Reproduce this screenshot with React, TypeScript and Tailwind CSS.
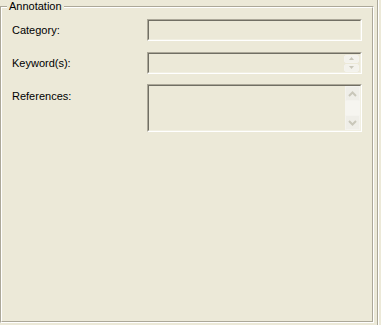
import React from "react";

function Sunken({ className, children }: { className?: string; children?: React.ReactNode }) {
  return (
    <div className={"border border-t-[#aca899] border-l-[#aca899] border-r-white border-b-white " + (className ?? "")}>
      <div className="h-full w-full border border-t-[#716f64] border-l-[#716f64] border-r-[#f1efe2] border-b-[#f1efe2] bg-[#ece9d8] flex justify-end">
        {children}
      </div>
    </div>
  );
}

function Chevron({ up }: { up?: boolean }) {
  return (
    <svg width="9" height="6" viewBox="0 0 9 6" className="block">
      <path
        d={up ? "M1 5 L4.5 1.5 L8 5" : "M1 1 L4.5 4.5 L8 1"}
        fill="none"
        stroke="#c9c7ba"
        strokeWidth="2"
      />
    </svg>
  );
}

function SmallTri({ up }: { up?: boolean }) {
  return (
    <svg width="5" height="3" viewBox="0 0 5 3" className="block">
      <path d={up ? "M2.5 0 L5 3 L0 3 Z" : "M0 0 L5 0 L2.5 3 Z"} fill="#c9c7ba" />
    </svg>
  );
}

export default function App() {
  return (
    <div
      className="relative w-[381px] h-[325px] bg-[#ece9d8] text-[11px] text-black overflow-hidden"
      style={{ fontFamily: "Tahoma, 'Liberation Sans', Arial, sans-serif" }}
    >
      <div className="flex h-full">
        <div className="pt-[6px] w-[374px] h-[323px]">
          <div className="relative h-full border border-t-[#aca899] border-l-[#aca899] border-r-white border-b-white">
            <div className="h-full border border-t-white border-l-white border-r-[#aca899] border-b-[#aca899] pl-[10px] pt-[11px]">
              <div className="flex flex-col gap-[10px]">
                <div className="flex items-center">
                  <div className="w-[135px] leading-[13px]">Category:</div>
                  <Sunken className="w-[215px] h-[22px]" />
                </div>
                <div className="flex items-center mt-[1px]">
                  <div className="w-[135px] leading-[13px]">Keyword(s):</div>
                  <Sunken className="w-[215px] h-[22px]">
                    <div className="flex flex-col justify-center gap-[1px] pr-[1px]">
                      <div className="w-[15px] h-[8px] rounded-[2px] border border-[#f4f3ee] bg-[#f3f2ec] flex items-center justify-center">
                        <SmallTri up />
                      </div>
                      <div className="w-[15px] h-[8px] rounded-[2px] border border-[#f4f3ee] bg-[#f3f2ec] flex items-center justify-center">
                        <SmallTri />
                      </div>
                    </div>
                  </Sunken>
                </div>
                <div className="flex items-start">
                  <div className="w-[135px] leading-[13px] pt-[6px]">References:</div>
                  <Sunken className="w-[215px] h-[48px]">
                    <div className="w-[15px] h-full flex flex-col bg-[#f6f5f0]">
                      <div className="h-[15px] rounded-[2px] border border-[#f4f3ee] bg-[#efeee8] flex items-center justify-center">
                        <Chevron up />
                      </div>
                      <div className="flex-1" />
                      <div className="h-[15px] rounded-[2px] border border-[#f4f3ee] bg-[#efeee8] flex items-center justify-center">
                        <Chevron />
                      </div>
                    </div>
                  </Sunken>
                </div>
              </div>
            </div>
            <div className="absolute left-[6px] top-[-7px] px-[2px] bg-[#ece9d8] leading-[13px]">Annotation</div>
          </div>
        </div>
        <div className="w-[3px]" />
        <div className="w-[1px] h-full bg-[#aca899]" />
        <div className="w-[1px] h-full bg-white" />
      </div>
    </div>
  );
}
